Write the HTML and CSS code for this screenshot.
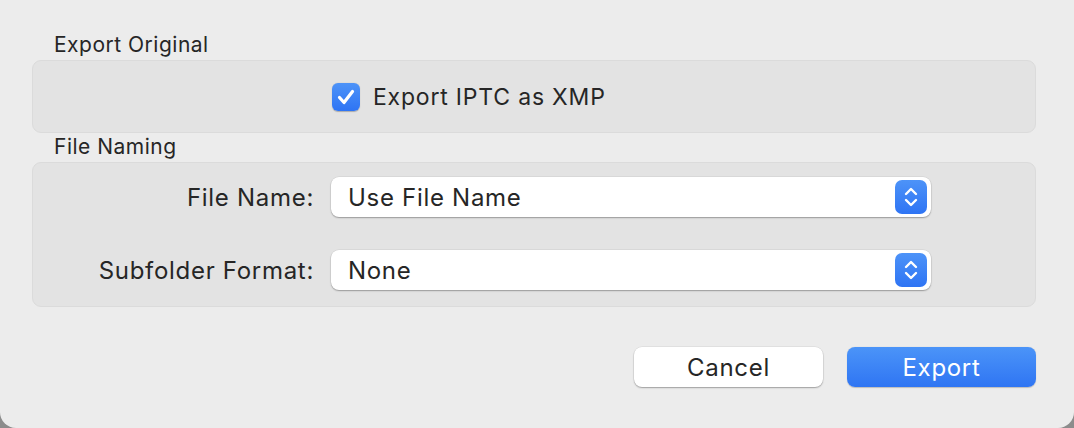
FILE: index.html
```html
<!DOCTYPE html>
<html lang="en">

<head>
    <meta charset="UTF-8">
    <meta name="viewport" content="width=device-width, initial-scale=1.0">
    <title>Export</title>
    <link rel="stylesheet" href="styles.css">
</head>

<body>
    <div class="window">
        <div class="section-title">Export Original</div>
        <div class="group group-original">
            <label class="check">
                <span class="check-box">
                    <svg width="20" height="18" viewBox="0 0 20 18">
                        <path d="M3.5 9.5 L8 14.5 L16.5 3.5" fill="none" stroke="white" stroke-width="3.2"
                            stroke-linecap="round" stroke-linejoin="round" />
                    </svg>
                </span>
                <span class="check-label">Export IPTC as XMP</span>
            </label>
        </div>

        <div class="section-title">File Naming</div>
        <div class="group group-naming">
            <div class="field-label">File Name:</div>
            <div class="popup">
                <span class="popup-value">Use File Name</span>
                <span class="stepper">
                    <svg width="16" height="24" viewBox="0 0 16 24">
                        <path d="M3 9 L8 4 L13 9 M3 15 L8 20 L13 15" fill="none" stroke="white"
                            stroke-width="2.4" stroke-linecap="round" stroke-linejoin="round" />
                    </svg>
                </span>
            </div>

            <div class="field-label">Subfolder Format:</div>
            <div class="popup">
                <span class="popup-value">None</span>
                <span class="stepper">
                    <svg width="16" height="24" viewBox="0 0 16 24">
                        <path d="M3 9 L8 4 L13 9 M3 15 L8 20 L13 15" fill="none" stroke="white"
                            stroke-width="2.4" stroke-linecap="round" stroke-linejoin="round" />
                    </svg>
                </span>
            </div>
        </div>

        <div class="buttons">
            <button class="btn btn-cancel">Cancel</button>
            <button class="btn btn-default">Export</button>
        </div>
    </div>
</body>

</html>
```

FILE: styles.css
```css
* {
    box-sizing: border-box;
}

html {
    background: #8c8c8c;
}

body {
    margin: 0;
    font-family: Inter, "Noto Sans", sans-serif;
    color: #262626;
}

.window {
    width: 1074px;
    height: 428px;
    background: #ececec;
    border-radius: 0 0 16px 16px;
    padding: 33px 38px 0 32px;
}

.section-title {
    font-size: 21px;
    letter-spacing: 0.5px;
    line-height: 23px;
    padding-left: 22px;
    margin-bottom: 4px;
}

.group {
    background: #e3e3e3;
    border: 1px solid #dbdbdb;
    border-radius: 9px;
    margin-bottom: 2px;
}

.group-original {
    height: 73px;
    display: flex;
    align-items: center;
    padding-left: 299px;
}

.check {
    display: flex;
    align-items: center;
    gap: 13px;
}

.check-box {
    width: 28px;
    height: 28px;
    border-radius: 6px;
    background: linear-gradient(#4d93f8, #2e74f4);
    display: flex;
    align-items: center;
    justify-content: center;
    box-shadow: 0 0.5px 1px rgba(0, 0, 0, 0.25);
}

.check-label {
    font-size: 23px;
    letter-spacing: 0.8px;
}

.group-naming {
    height: 145px;
    display: grid;
    grid-template-columns: 281px 600px;
    column-gap: 17px;
    row-gap: 33px;
    align-items: center;
    align-content: start;
    padding-top: 14px;
}

.field-label {
    font-size: 24px;
    letter-spacing: 0.7px;
    text-align: right;
}

.popup {
    height: 40px;
    background: #fff;
    border-radius: 8px;
    box-shadow: 0 1px 1.5px rgba(0, 0, 0, 0.3), 0 0 0 0.5px rgba(0, 0, 0, 0.08);
    display: flex;
    align-items: center;
    justify-content: space-between;
    padding: 0 4px 0 17px;
}

.popup-value {
    font-size: 24px;
    letter-spacing: 0.7px;
}

.stepper {
    width: 32px;
    height: 34px;
    border-radius: 7px;
    background: linear-gradient(#4d93f8, #2e74f4);
    display: flex;
    align-items: center;
    justify-content: center;
}

.buttons {
    display: flex;
    justify-content: flex-end;
    gap: 24px;
    margin-top: 40px;
}

.btn {
    width: 189px;
    height: 40px;
    border: none;
    border-radius: 8px;
    font-family: Inter, "Noto Sans", sans-serif;
    font-size: 24px;
    letter-spacing: 0.7px;
    padding: 0;
}

.btn-cancel {
    background: #fff;
    color: #262626;
    box-shadow: 0 1px 1.5px rgba(0, 0, 0, 0.3), 0 0 0 0.5px rgba(0, 0, 0, 0.08);
}

.btn-default {
    background: linear-gradient(#4b94f8, #2f75f3);
    color: #fff;
    box-shadow: 0 0.5px 1px rgba(0, 0, 0, 0.2);
}
```
